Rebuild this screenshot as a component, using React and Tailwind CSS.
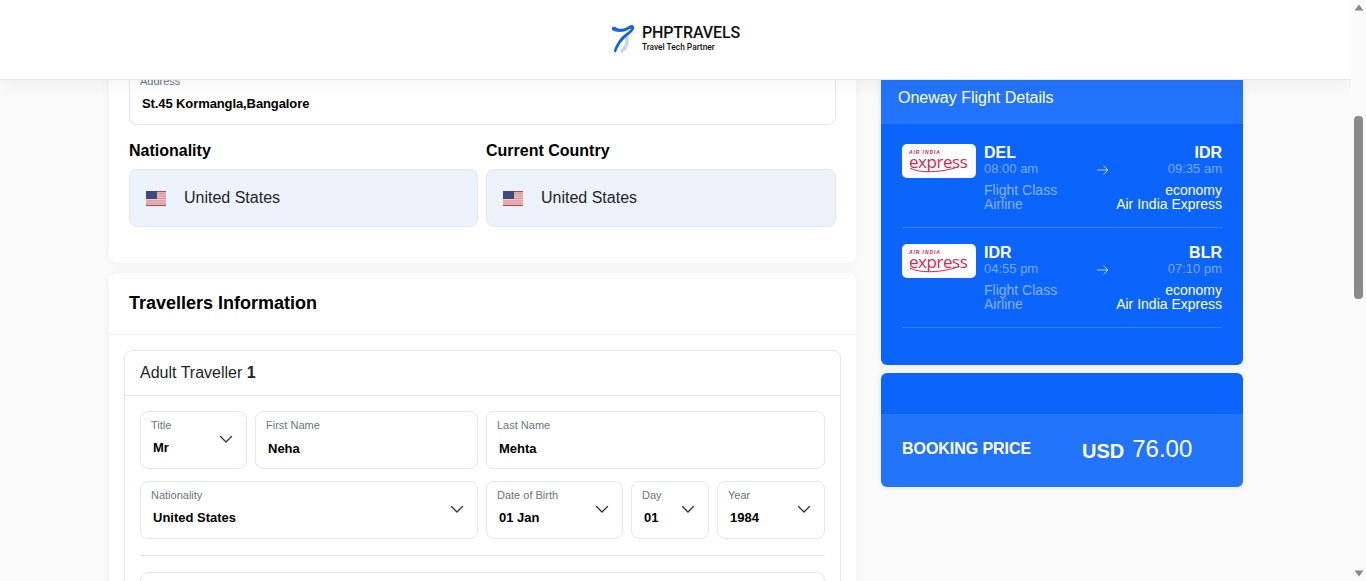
const Chevron = () => (
  <svg width="16" height="16" viewBox="0 0 16 16" fill="none" className="shrink-0">
    <path d="m2.5 5.5 5.5 5.5 5.5-5.5" stroke="#343a40" strokeWidth="1.4" strokeLinecap="round" strokeLinejoin="round" />
  </svg>
);

const Flag = () => (
  <svg width="20" height="15" viewBox="0 0 20 15" className="shrink-0">
    <rect width="20" height="15" fill="#f3c9cd" />
    <rect y="0" width="20" height="1.2" fill="#b8464f" />
    <rect y="2.3" width="20" height="1.1" fill="#cf8a90" />
    <rect y="4.6" width="20" height="1.1" fill="#cf8a90" />
    <rect y="6.9" width="20" height="1.1" fill="#cf8a90" />
    <rect y="9.4" width="20" height="1.1" fill="#d98f95" />
    <rect y="11.6" width="20" height="1.1" fill="#d98f95" />
    <rect y="13.8" width="20" height="1.2" fill="#b8464f" />
    <rect width="11" height="8" fill="#3c4a7d" />
  </svg>
);

const Logo = () => (
  <svg width="26" height="32" viewBox="0 0 26 32" fill="none" className="shrink-0">
    <path d="M14 14 C17 13 17 12 17 12 C19 18 18 26 11 30 C9 30 9 28 10 26 C13 24 15 20 14 14Z" fill="#c3d8f8" />
    <path d="M1 5 C2 3 4 4 6 5 C11 7 15 5 18 3 C21 1 24 2 23 6 C21 10 17 12 13 16 C9 20 7 24 5 29 C4 30 3 29 3 27 C5 21 9 15 14 11 C17 9 20 7 20 5.500 C18 6 15 9 9 9 C6 9 3 8 1 7Z" fill="#1262e8" />
  </svg>
);

const AirlineLogo = () => (
  <div className="w-[74px] h-[34px] bg-white rounded-[5px] flex flex-col items-start pl-[7px] shrink-0 overflow-hidden">
    <span className="text-[5px] leading-[5px] mt-[6px] font-black italic text-[#d3213f] tracking-[0.9px]">AIR INDIA</span>
    <span className="text-[17px] leading-[15px] -mt-[1px] text-[#e0234a] tracking-[-0.45px] font-['Open_Sans',sans-serif]">express</span>
    <svg width="48" height="6" viewBox="0 0 48 6" className="-mt-[2px]" fill="none">
      <path d="M1 1 C10 6 28 6 46 1" stroke="#e0234a" strokeWidth="1" />
    </svg>
  </div>
);

function Field({ label, value, width, select, valueClass }) {
  return (
    <div className={`h-[58px] border border-[#e3e8f0] rounded-lg bg-white relative pl-[10px] pt-[6px] ${width}`}>
      <div className="text-[11px] leading-[14px] text-[#6c757d]">{label}</div>
      <div className={`text-[13px] leading-[16px] font-bold text-black pl-[2px] ${valueClass}`}>{value}</div>
      {select && (
        <div className="absolute right-[12px] top-[19px]">
          <Chevron />
        </div>
      )}
    </div>
  );
}

function CountryBox({ label, country }) {
  return (
    <div>
      <div className="text-[16px] leading-[18px] font-bold text-black">{label}</div>
      <div className="mt-[9px] h-[58px] bg-[#edf3fb] border border-[#e3e8f0] rounded-lg flex items-center pl-[16px] gap-[18px]">
        <Flag />
        <span className="text-[16px] text-[#212529]">{country}</span>
      </div>
    </div>
  );
}

function FlightLeg({ from, fromTime, to, toTime }) {
  return (
    <div className="h-[100px] border-b border-white/20 flex gap-[8px] pt-[16px]">
      <AirlineLogo />
      <div className="flex-1">
        <div className="flex justify-between">
          <div>
            <div className="text-[16px] leading-[18px] font-bold text-white">{from}</div>
            <div className="text-[13px] leading-[14px] text-white/45">{fromTime}</div>
          </div>
          <div className="text-right">
            <div className="text-[16px] leading-[18px] font-bold text-white">{to}</div>
            <div className="text-[13px] leading-[14px] text-white/45">{toTime}</div>
          </div>
        </div>
        <div className="flex justify-between mt-[7px] text-[14px] leading-[14px] relative">
          <div className="text-white/50">
            <div>Flight Class</div>
            <div>Airline</div>
          </div>
          <div className="text-right text-white">
            <div>economy</div>
            <div>Air India Express</div>
          </div>
          <svg width="14" height="14" viewBox="0 0 14 14" fill="none" className="absolute left-[112px] -top-[20px]">
            <path d="M1 7h11M7.500 2.500 12 7l-4.500 4.500" stroke="#ffffff" strokeOpacity="0.7" strokeWidth="1" />
          </svg>
        </div>
      </div>
    </div>
  );
}

export default function App() {
  return (
    <div className="h-[581px] w-full overflow-hidden flex bg-[#fafafa] font-['Liberation_Sans',Arial,sans-serif]">
      <div className="flex-1 min-w-0 flex flex-col">
        {/* Header */}
        <header className="h-[80px] shrink-0 bg-white border-b border-[#e5e5e5] shadow-[0_4px_18px_rgba(0,0,0,0.05)] relative z-10 flex items-center justify-center">
          <div className="flex items-center gap-[5px] mt-[-1px]">
            <Logo />
            <div className="font-['Roboto',sans-serif] text-[#111]">
              <div className="text-[16px] leading-[17px] font-medium tracking-[-0.1px] -mt-[1px]">PHPTRAVELS</div>
              <div className="text-[8.400px] leading-[13px] font-medium">Travel Tech Partner</div>
            </div>
          </div>
        </header>

        {/* Page body, scrolled down */}
        <div className="flex items-start pl-[109px] gap-[25px]">
          <div className="w-[747px] shrink-0 -mt-[16px]">
            <div className="bg-white rounded-b-lg shadow-[0_0_12px_rgba(0,0,0,0.04)] h-[199px] px-[20px]">
              <div className="h-[61px] border border-[#e3e8f0] border-t-0 rounded-b-lg relative">
                <div className="absolute left-[10px] top-[10px] text-[11px] leading-[14px] text-[#6c757d]">Address</div>
                <div className="absolute left-[12px] top-[32px] text-[13px] leading-[16px] font-bold text-black tracking-[-0.1px]">St.45 Kormangla,Bangalore</div>
              </div>
              <div className="grid grid-cols-[349px_1fr] gap-[8px] mt-[17px]">
                <CountryBox label="Nationality" country="United States" />
                <CountryBox label="Current Country" country="United States" />
              </div>
            </div>

            <div className="bg-white rounded-t-lg shadow-[0_0_12px_rgba(0,0,0,0.04)] mt-[10px] h-[400px]">
              <div className="h-[62px] border-b border-[#eef0f4] pl-[20px] flex items-center">
                <h2 className="text-[18px] font-bold text-black">Travellers Information</h2>
              </div>
              <div className="mx-[15px] mt-[15px] border border-[#e3e8f0] rounded-lg h-[320px]">
                <div className="h-[45px] border-b border-[#e3e8f0] pl-[15px] flex items-center text-[16px] text-[#212529]">
                  <span>Adult Traveller&nbsp;<b>1</b></span>
                </div>
                <div className="px-[15px] pt-[15px]">
                  <div className="flex gap-[8px]">
                    <Field label="Title" value="Mr" width="w-[107px]" select valueClass="mt-[8px]" />
                    <Field label="First Name" value="Neha" width="w-[223px]" valueClass="mt-[9px]" />
                    <Field label="Last Name" value="Mehta" width="flex-1" valueClass="mt-[9px]" />
                  </div>
                  <div className="flex gap-[8px] mt-[12px]">
                    <Field label="Nationality" value="United States" width="w-[338px]" select valueClass="mt-[8px]" />
                    <Field label="Date of Birth" value="01 Jan" width="w-[137px]" select valueClass="mt-[8px]" />
                    <Field label="Day" value="01" width="w-[78px]" select valueClass="mt-[8px]" />
                    <Field label="Year" value="1984" width="flex-1" select valueClass="mt-[8px]" />
                  </div>
                  <div className="border-t border-[#e3e8f0] mt-[16px]" />
                  <div className="border border-[#e3e8f0] rounded-lg h-[40px] mt-[16px]" />
                </div>
              </div>
            </div>
          </div>

          {/* Sidebar */}
          <aside className="w-[362px] shrink-0">
            <div className="bg-[#0b64fc] rounded-b-md h-[285px] shadow-[0_0_10px_rgba(0,0,0,0.06)]">
              <div className="h-[44px] bg-white/10 pl-[17px] pb-[8px] flex items-center text-[16px] text-white">Oneway Flight Details</div>
              <div className="px-[21px] pt-[4px]">
                <FlightLeg from="DEL" fromTime="08:00 am" to="IDR" toTime="09:35 am" />
                <FlightLeg from="IDR" fromTime="04:55 pm" to="BLR" toTime="07:10 pm" />
              </div>
            </div>
            <div className="bg-[#0b64fc] rounded-md mt-[8px] h-[114px] overflow-hidden shadow-[0_0_10px_rgba(0,0,0,0.06)]">
              <div className="h-[41px]" />
              <div className="h-[73px] bg-white/10 flex items-center pl-[21px] text-white">
                <span className="text-[16px] font-bold w-[180px] -mt-[3px] tracking-[-0.05px]">BOOKING PRICE</span>
                <span className="text-[20px] font-bold">USD</span>
                <span className="text-[24px] ml-[8px] -mt-[3px]">76.00</span>
              </div>
            </div>
          </aside>
        </div>
      </div>

      {/* Scrollbar */}
      <div className="w-[15px] shrink-0 bg-[#fbfbfb] flex flex-col items-center justify-between py-[4px] relative z-20">
        <svg width="10" height="7" viewBox="0 0 10 7"><path d="M5 0.500 9.500 6.500H0.500Z" fill="#8a8a8a" /></svg>
        <div className="w-[9px] h-[183px] rounded-[4px] bg-[#8a8a8a] mb-[168px] mt-[2px]" />
        <svg width="10" height="7" viewBox="0 0 10 7"><path d="M5 6.500 9.500 0.500H0.500Z" fill="#8a8a8a" /></svg>
      </div>
    </div>
  );
}
